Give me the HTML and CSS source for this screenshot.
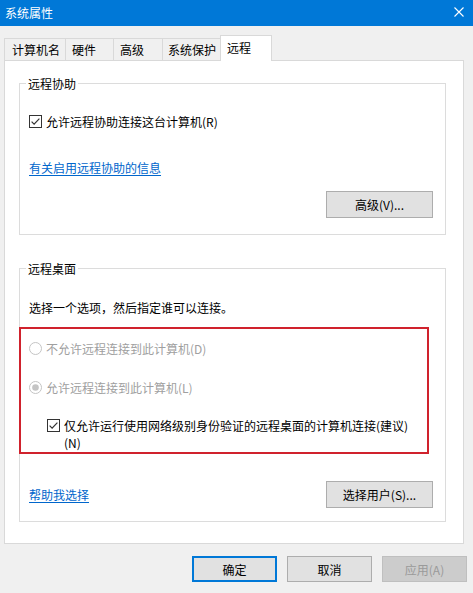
FILE: index.html
```html
<!DOCTYPE html>
<html lang="zh-CN">
<head>
<meta charset="utf-8">
<title>系统属性</title>
<link rel="stylesheet" href="styles.css">
</head>
<body>
<div class="window">
  <div class="titlebar">
    <span class="title">系统属性</span>
    <svg class="close" width="10" height="10" viewBox="0 0 10 10"><path d="M0.5 0.5 L9.5 9.5 M9.5 0.5 L0.5 9.5" stroke="#fff" stroke-width="1.1" fill="none"/></svg>
  </div>
  <div class="tabs">
    <div class="tab tab-name">计算机名</div>
    <div class="tab tab-hw">硬件</div>
    <div class="tab tab-adv">高级</div>
    <div class="tab tab-prot">系统保护</div>
    <div class="tab tab-remote active">远程</div>
  </div>
  <div class="panel">
    <fieldset class="group group-assist">
      <legend>远程协助</legend>
      <div class="check-row">
        <svg class="checkbox" width="13" height="13" viewBox="0 0 13 13"><rect x="0.5" y="0.5" width="12" height="12" fill="#fff" stroke="#333"/><path d="M2.6 6.6 L5.1 9.1 L10.4 3.6" stroke="#333" stroke-width="1.2" fill="none"/></svg>
        <span class="label">允许远程协助连接这台计算机(R)</span>
      </div>
      <div class="link-row"><a class="link" href="#">有关启用远程协助的信息</a></div>
      <div class="btn-row"><button class="btn btn-wide">高级(V)...</button></div>
    </fieldset>
    <fieldset class="group group-desktop">
      <legend>远程桌面</legend>
      <div class="intro">选择一个选项，然后指定谁可以连接。</div>
      <div class="highlight">
        <div class="radio-row disabled">
          <svg class="radio" width="13" height="13" viewBox="0 0 13 13"><circle cx="6.5" cy="6.5" r="6" fill="#fff" stroke="#c4c4c4"/></svg>
          <span class="label">不允许远程连接到此计算机(D)</span>
        </div>
        <div class="radio-row disabled second">
          <svg class="radio" width="13" height="13" viewBox="0 0 13 13"><circle cx="6.5" cy="6.5" r="6" fill="#fff" stroke="#c4c4c4"/><circle cx="6.5" cy="6.5" r="3.3" fill="#c4c4c4"/></svg>
          <span class="label">允许远程连接到此计算机(L)</span>
        </div>
        <div class="check-row nla">
          <svg class="checkbox" width="13" height="13" viewBox="0 0 13 13"><rect x="0.5" y="0.5" width="12" height="12" fill="#fff" stroke="#333"/><path d="M2.6 6.6 L5.1 9.1 L10.4 3.6" stroke="#333" stroke-width="1.2" fill="none"/></svg>
          <span class="label wrap">仅允许运行使用网络级别身份验证的远程桌面的计算机连接(建议)(N)</span>
        </div>
      </div>
      <div class="action-row">
        <a class="link" href="#">帮助我选择</a>
        <button class="btn btn-wide">选择用户(S)...</button>
      </div>
    </fieldset>
  </div>
  <div class="footer">
    <button class="btn btn-foot btn-default">确定</button>
    <button class="btn btn-foot">取消</button>
    <button class="btn btn-foot btn-disabled">应用(A)</button>
  </div>
</div>
</body>
</html>
```
FILE: styles.css
```css
* { box-sizing: border-box; }
html, body {
  margin: 0;
  padding: 0;
  background: #f0f0f0;
}
body {
  font-family: "Noto Sans CJK SC", "Microsoft YaHei", sans-serif;
  font-size: 12px;
  line-height: 17px;
  color: #000;
}
.window {
  width: 473px;
  height: 593px;
  background: #f0f0f0;
  overflow: hidden;
}
.titlebar {
  height: 26px;
  background: #0078d7;
  color: #fff;
  display: flex;
  align-items: center;
  justify-content: space-between;
  padding: 0 9px 2px 5px;
}
.title { line-height: 17px; }
.close { display: block; }

.tabs {
  display: flex;
  align-items: flex-end;
  margin-top: 9px;
  padding-left: 4px;
  height: 25px;
}
.tab {
  height: 22px;
  border: 1px solid #d9d9d9;
  border-bottom: none;
  background: #f0f0f0;
  padding: 2px 0 0 6px;
  margin-left: -1px;
  white-space: nowrap;
}
.tab-name { margin-left: 0; width: 62px; padding-left: 7px; }
.tab-hw { width: 49px; }
.tab-adv { width: 50px; }
.tab-prot { width: 60px; padding-left: 5px; }
.tab.active {
  position: relative;
  z-index: 1;
  width: 52px;
  height: 26px;
  margin-left: -2px;
  margin-bottom: -1px;
  background: #fff;
  padding-top: 3px;
}

.panel {
  margin-left: 4px;
  width: 460px;
  background: #fff;
  border: 1px solid #d9d9d9;
  padding: 0 0 21px 14px;
}
.group {
  margin: 0;
  width: 427px;
  border: 1px solid #dcdcdc;
  padding: 0 12px 0 9px;
  min-width: 0;
}
.group legend {
  padding: 0 2px;
  margin-left: -3px;
  line-height: 17px;
}
.group-assist { margin-top: 14px; padding-top: 21px; padding-bottom: 16px; }
.group-desktop { margin-top: 25px; padding-top: 22px; padding-bottom: 13px; }

.check-row, .radio-row {
  display: flex;
  align-items: flex-start;
  gap: 4px;
}
.checkbox, .radio {
  flex: none;
  display: block;
  margin-top: 2px;
}
.link-row { margin-top: 29px; }
.link {
  color: #0066cc;
  text-decoration: underline;
  text-underline-offset: 2px;
}
.btn-row {
  margin-top: 15px;
  display: flex;
  justify-content: flex-end;
}
.btn {
  font-family: inherit;
  font-size: 12px;
  line-height: 17px;
  color: #000;
  background: #e1e1e1;
  border: 1px solid #adadad;
  border-radius: 0;
  padding: 0;
  margin: 0;
}
.btn-wide { width: 107px; height: 27px; }

.intro { line-height: 17px; }
.highlight {
  margin: 11px 0 0 -10px;
  width: 410px;
  border: 2px solid #d0222d;
  padding: 11px 0 1px 8px;
}
.disabled { color: #a0a0a0; }
.radio-row.second { margin-top: 22px; }
.check-row.nla { margin-top: 21px; padding-left: 18px; }
.label.wrap { width: 352px; }

.action-row {
  margin-top: 27px;
  display: flex;
  justify-content: space-between;
  align-items: center;
}

.footer {
  margin-top: 12px;
  display: flex;
  justify-content: flex-end;
  gap: 10px;
  padding-right: 6px;
}
.btn-foot { width: 85px; height: 26px; }
.btn-default { border: 2px solid #0078d7; }
.btn-disabled {
  background: #cccccc;
  border-color: #bfbfbf;
  color: #9a9a9a;
}
```
